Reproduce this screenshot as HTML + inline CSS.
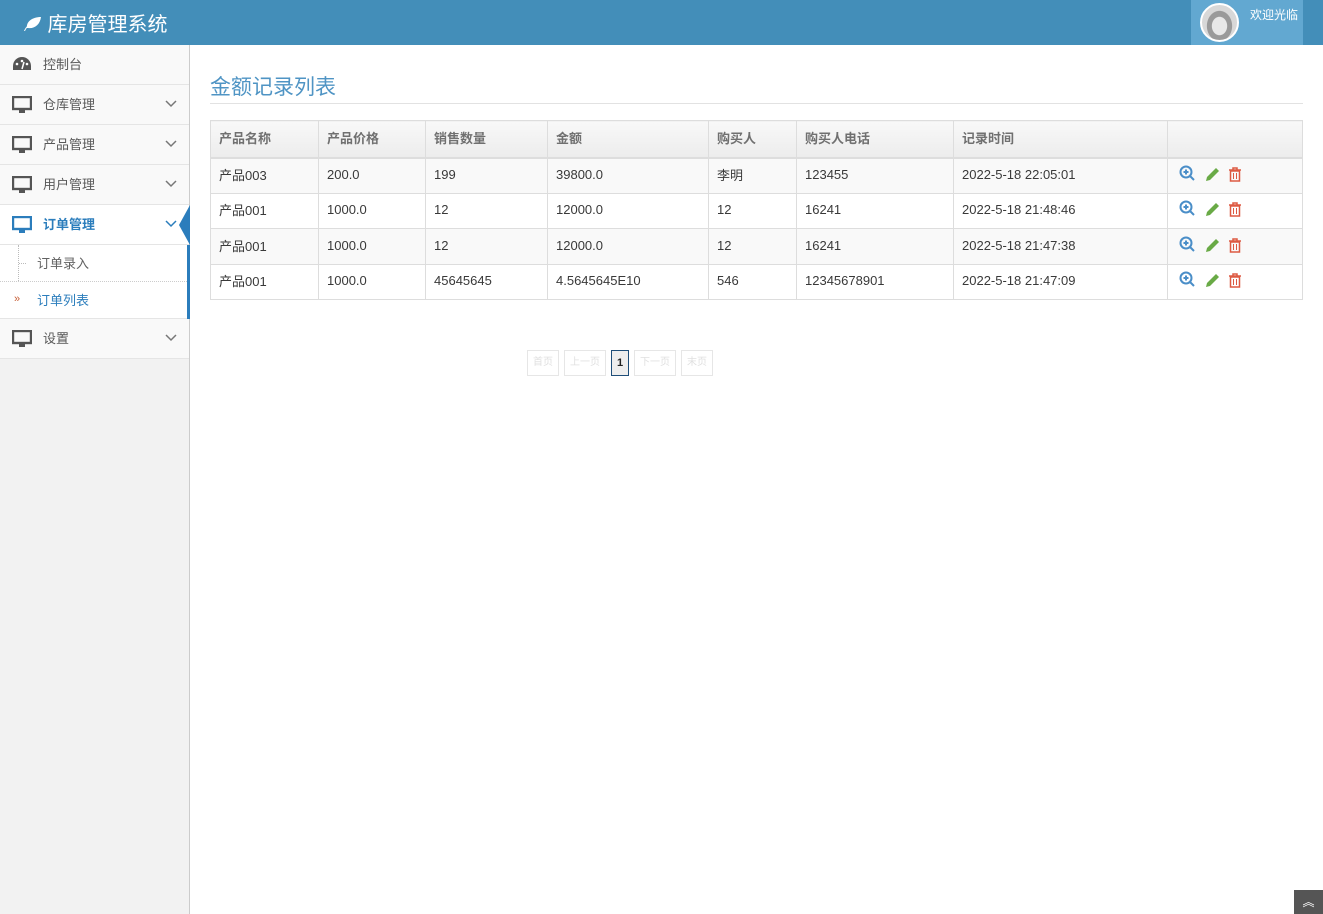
<!DOCTYPE html>
<html><head><meta charset="utf-8"><style>
*{margin:0;padding:0;box-sizing:border-box}
body{width:1323px;height:914px;font-family:"Liberation Sans","Noto Sans CJK SC",sans-serif;font-size:13px;color:#393939;background:#fff;position:relative;overflow:hidden}
.nav{position:absolute;left:0;top:0;width:1323px;height:45px;background:#438eb9}
.brand{position:absolute;left:22px;top:8px;color:#fff;font-size:20px}
.user{position:absolute;left:1191px;top:0;width:112px;height:45px;background:#62a8d1}
.av{position:absolute;left:9px;top:3px;width:39px;height:39px;border-radius:50%;border:2px solid #fff;background:radial-gradient(ellipse at 50% 60%,#e8e8e8 0 30%,#9a9a9a 32% 50%,#d8d8d8 52%)}
.user span{position:absolute;left:59px;top:6px;color:#fff;font-size:12px}
.side{position:absolute;left:0;top:45px;width:190px;height:869px;background:#f2f2f2;border-right:1px solid #ccc}
.it{height:40px;background:#f9f9f9;border-bottom:1px solid #e5e5e5;position:relative;padding-left:43px;line-height:39px;font-size:13px;color:#585858}
.it svg.ic{position:absolute;left:12px;top:11px}
.chev{position:absolute;left:165px;top:13px}
.act{color:#2b7dbc;background:#fff;font-weight:bold}
.sub{background:#fff;height:37px;line-height:37px;padding-left:37px;color:#616161;position:relative;border-bottom:1px dotted #ccc}
h1{position:absolute;left:210px;top:71px;font-size:21px;font-weight:normal;color:#4f94c4}
.hr{position:absolute;left:210px;top:103px;width:1093px;height:1px;background:#e2e2e2}
table{position:absolute;left:210px;top:120px;width:1093px;border-collapse:collapse}
td,th{border:1px solid #ddd;padding:0 8px;text-align:left;font-size:13px}
th{height:37px;background:linear-gradient(#f8f8f8,#ececec);color:#707070;font-weight:bold;border-bottom:2px solid #ddd;padding-bottom:2px}
td{height:35.5px;color:#393939;padding-bottom:2px}
tr.o td{background:#f9f9f9}
.pg{position:absolute;top:350px;height:26px;border:1px solid #e6e6e6;color:#e0e0e0;font-size:10px;line-height:24px;text-align:center}
.top{position:absolute;left:1294px;top:890px;width:29px;height:24px;background:#555;color:#fff;text-align:center;font-size:12px;line-height:24px}
</style></head><body>
<div class="nav"><div class="brand"><svg width="20" height="16" viewBox="0 0 20 16" style="vertical-align:-1px"><path d="M2 15C4 10 8 7 13 5C8 8 5 11 3 15ZM5 12C4 6 10 1 19 1C18 9 12 13 6 12Z" fill="#fff"/></svg> 库房管理系统</div>
<div class="user"><div class="av"></div><span>欢迎光临</span></div></div>
<div class="side">
<div class="it"><svg class="ic" width="20" height="16" viewBox="0 0 20 16"><path d="M10 1A9 9 0 0 0 1 10v4h18v-4A9 9 0 0 0 10 1z" fill="#555"/><circle cx="5" cy="8" r="1.3" fill="#fff"/><circle cx="10" cy="5" r="1.3" fill="#fff"/><circle cx="15" cy="8" r="1.3" fill="#fff"/><path d="M10 13L12 6" stroke="#fff" stroke-width="1.5"/></svg>控制台</div>
<div class="it"><svg class="ic" width="20" height="18" viewBox="0 0 20 18"><rect x="1" y="1" width="18" height="12" fill="none" stroke="#555" stroke-width="2.4"/><rect x="7" y="13" width="6" height="4" fill="#555"/></svg>仓库管理<svg class="chev" width="12" height="12"><path d="M1 3l5 5 5-5" fill="none" stroke="#777" stroke-width="1.5"/></svg></div>
<div class="it"><svg class="ic" width="20" height="18" viewBox="0 0 20 18"><rect x="1" y="1" width="18" height="12" fill="none" stroke="#555" stroke-width="2.4"/><rect x="7" y="13" width="6" height="4" fill="#555"/></svg>产品管理<svg class="chev" width="12" height="12"><path d="M1 3l5 5 5-5" fill="none" stroke="#777" stroke-width="1.5"/></svg></div>
<div class="it"><svg class="ic" width="20" height="18" viewBox="0 0 20 18"><rect x="1" y="1" width="18" height="12" fill="none" stroke="#555" stroke-width="2.4"/><rect x="7" y="13" width="6" height="4" fill="#555"/></svg>用户管理<svg class="chev" width="12" height="12"><path d="M1 3l5 5 5-5" fill="none" stroke="#777" stroke-width="1.5"/></svg></div>
<div class="it act"><svg class="ic" width="20" height="18" viewBox="0 0 20 18"><rect x="1" y="1" width="18" height="12" fill="none" stroke="#2b7dbc" stroke-width="2.4"/><rect x="7" y="13" width="6" height="4" fill="#2b7dbc"/></svg>订单管理<svg class="chev" width="12" height="12"><path d="M1 3l5 5 5-5" fill="none" stroke="#2b7dbc" stroke-width="1.5"/></svg><svg style="position:absolute;left:179px;top:0" width="11" height="40"><path d="M11 0V40L0 20Z" fill="#2b7dbc"/></svg></div>
<div style="border-right:3px solid #2b7dbc;margin-right:-1px">
<div class="sub"><span style="position:absolute;left:18px;top:0;height:74px;border-left:1px dotted #bbb"></span><span style="position:absolute;left:19px;top:18px;width:7px;border-top:1px dotted #bbb"></span>订单录入</div>
<div class="sub" style="color:#2b7dbc;border-bottom:1px solid #e5e5e5"><span style="position:absolute;left:14px;top:-1px;color:#c86139;font-size:11px">»</span>订单列表</div></div>
<div class="it"><svg class="ic" width="20" height="18" viewBox="0 0 20 18"><rect x="1" y="1" width="18" height="12" fill="none" stroke="#555" stroke-width="2.4"/><rect x="7" y="13" width="6" height="4" fill="#555"/></svg>设置<svg class="chev" width="12" height="12"><path d="M1 3l5 5 5-5" fill="none" stroke="#777" stroke-width="1.5"/></svg></div>
</div>
<h1>金额记录列表</h1><div class="hr"></div>
<table>
<tr><th style="width:108px">产品名称</th><th style="width:107px">产品价格</th><th style="width:122px">销售数量</th><th style="width:161px">金额</th><th style="width:88px">购买人</th><th style="width:157px">购买人电话</th><th style="width:214px">记录时间</th><th></th></tr>
<tr class="o"><td>产品003</td><td>200.0</td><td>199</td><td>39800.0</td><td>李明</td><td>123455</td><td>2022-5-18 22:05:01</td><td></td></tr>
<tr><td>产品001</td><td>1000.0</td><td>12</td><td>12000.0</td><td>12</td><td>16241</td><td>2022-5-18 21:48:46</td><td></td></tr>
<tr class="o"><td>产品001</td><td>1000.0</td><td>12</td><td>12000.0</td><td>12</td><td>16241</td><td>2022-5-18 21:47:38</td><td></td></tr>
<tr><td>产品001</td><td>1000.0</td><td>45645645</td><td>4.5645645E10</td><td>546</td><td>12345678901</td><td>2022-5-18 21:47:09</td><td></td></tr>
</table>
<div class="pg" style="left:527px;width:32px">首页</div>
<div class="pg" style="left:564px;width:42px">上一页</div>
<div class="pg" style="left:611px;width:18px;border-color:#1f4e79;background:#eee;color:#222;font-weight:bold;font-size:11px">1</div>
<div class="pg" style="left:634px;width:42px">下一页</div>
<div class="pg" style="left:681px;width:32px">末页</div>
<div class="top">︽</div>
<svg style="position:absolute;left:1178px;top:163px" width="70" height="130">
<defs><g id="r">
<circle cx="8" cy="8" r="5.5" fill="none" stroke="#4a8ec8" stroke-width="2"/><path d="M12 12l4 4M8 5.5v5M5.5 8h5" stroke="#4a8ec8" stroke-width="2"/>
<path d="M28 17l1-4 9-9 3 3-9 9z" fill="#69aa46"/>
<path d="M51 6h12M55 6V4h4v2M52.5 7h9v10h-9z" fill="none" stroke="#dd5a43" stroke-width="1.5"/><path d="M55.5 9v6M58.5 9v6" stroke="#dd5a43" stroke-width="1"/>
</g></defs>
<use href="#r" y="1"/><use href="#r" y="36"/><use href="#r" y="72"/><use href="#r" y="107"/>
</svg>
</body></html>
